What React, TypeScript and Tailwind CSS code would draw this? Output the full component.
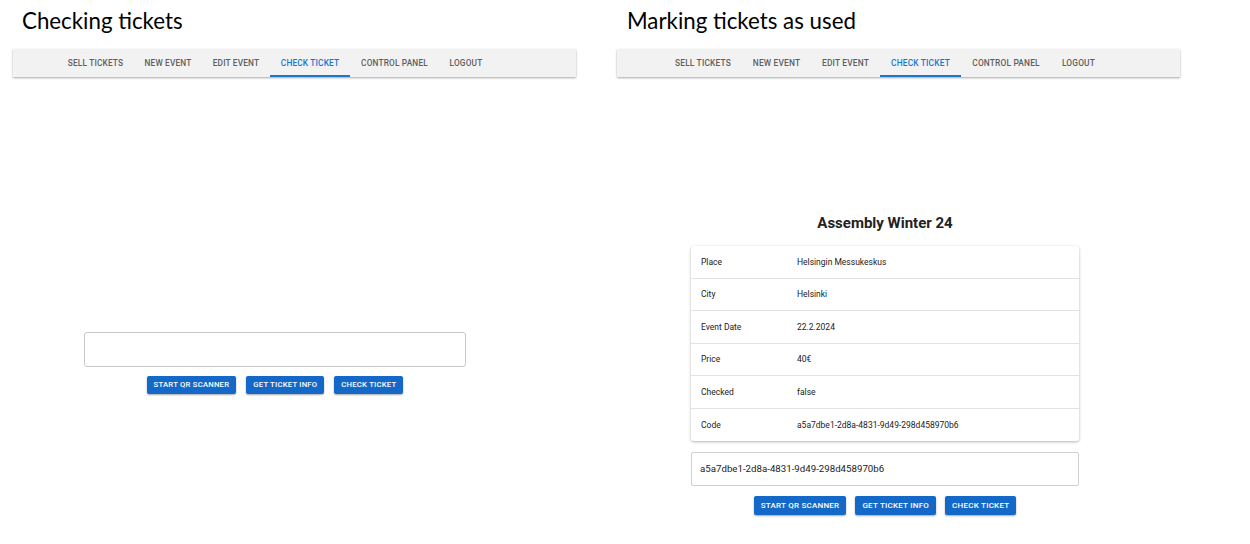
import React from 'react';

const tabs = ["Sell tickets", "New event", "Edit event", "Check ticket", "Control panel", "Logout"];

const NavBar = ({ padLeft, size, widths }: { padLeft: string; size: string; widths: string[] }) => (
    <div className="h-[28px] w-full bg-[#f2f2f2] shadow-[0_1px_2px_rgba(0,0,0,0.35)]">
        <div className={`flex h-full ${padLeft}`}>
            {tabs.map((t, i) => {
                const active = t === "Check ticket";
                return (
                    <div
                        key={t}
                        className={
                            active
                                ? `flex h-full shrink-0 items-center justify-center whitespace-nowrap border-b-2 border-[#1976d2] pt-[2px] ${widths[i]} ${size} font-medium uppercase tracking-[0.02em] text-[#1976d2]`
                                : `flex h-full shrink-0 items-center justify-center whitespace-nowrap ${widths[i]} ${size} font-medium uppercase tracking-[0.02em] text-[#5f5f5f]`
                        }
                    >
                        {t}
                    </div>
                );
            })}
        </div>
    </div>
);

const Buttons = ({ size, gap }: { size: string; gap: string }) => (
    <div className={`flex justify-center ${gap}`}>
        {["Start QR scanner", "Get ticket info", "Check ticket"].map((b) => (
            <div
                key={b}
                className={`flex items-center rounded-[2px] bg-[#1468c8] px-[7px] ${size} font-medium uppercase tracking-[0.03em] text-white shadow-[0_1px_2px_rgba(0,0,0,0.35)]`}
            >
                {b}
            </div>
        ))}
    </div>
);

const rows = [
    ["Place", "Helsingin Messukeskus"],
    ["City", "Helsinki"],
    ["Event Date", "22.2.2024"],
    ["Price", "40€"],
    ["Checked", "false"],
    ["Code", "a5a7dbe1-2d8a-4831-9d49-298d458970b6"],
];

const TicketCard = () => (
    <div className="w-[388px] rounded-[3px] bg-white shadow-[0_1px_3px_rgba(0,0,0,0.3)]">
        {rows.map(([label, value], i) => (
            <div
                key={label}
                className={
                    i < rows.length - 1
                        ? "flex h-[32.5px] items-center border-b border-[#e2e2e2] pt-[1px] text-[8.5px] text-[#222]"
                        : "flex h-[32.5px] items-center pt-[1px] text-[8.5px] text-[#222]"
                }
            >
                <div className="w-[106px] pl-[10px]">{label}</div>
                <div>{value}</div>
            </div>
        ))}
    </div>
);

export default function App() {
    return (
        <div className="flex h-[544px] w-[1250px] gap-[41px] bg-white pl-[13px] font-['Roboto',sans-serif]">
            {/* left: checking tickets */}
            <div className="flex w-[563px] flex-col">
                <h1 className="h-[49px] pl-[9px] pt-[6px] font-['Lato',sans-serif] text-[22.3px] leading-[30px] text-black">
                    Checking tickets
                </h1>
                <NavBar
                    padLeft="pl-[44px]"
                    size="text-[8.3px]"
                    widths={["w-[77px]", "w-[68px]", "w-[68px]", "w-[80px]", "w-[89px]", "w-[54px]"]}
                />
                <div className="flex w-[524px] flex-col items-center pt-[255px]">
                    <div className="h-[35px] w-[382px] rounded-[3px] border border-[#c8c8c8]" />
                    <div className="mt-[9px] h-[18px]">
                        <Buttons size="h-[18px] text-[7.7px]" gap="gap-[10px]" />
                    </div>
                </div>
            </div>

            {/* right: marking tickets as used */}
            <div className="flex w-[563px] flex-col">
                <h1 className="h-[49px] pl-[10px] pt-[6px] font-['Lato',sans-serif] text-[22.3px] leading-[30px] text-black">
                    Marking tickets as used
                </h1>
                <NavBar
                    padLeft="pl-[47px]"
                    size="text-[8.4px]"
                    widths={["w-[78px]", "w-[69px]", "w-[69px]", "w-[81px]", "w-[90px]", "w-[55px]"]}
                />
                <div className="flex w-[536px] flex-col items-center pt-[137px]">
                    <div className="text-[15px] font-bold leading-[18px] text-[#222]">Assembly Winter 24</div>
                    <div className="mt-[14px]">
                        <TicketCard />
                    </div>
                    <div className="mt-[11px] flex h-[34px] w-[388px] items-center rounded-[2px] border border-[#d0d0d0] pl-[8px] text-[9.7px] text-[#222]">
                        a5a7dbe1-2d8a-4831-9d49-298d458970b6
                    </div>
                    <div className="mt-[10px]">
                        <Buttons size="h-[19px] text-[8px]" gap="gap-[9px]" />
                    </div>
                </div>
            </div>
        </div>
    );
}
